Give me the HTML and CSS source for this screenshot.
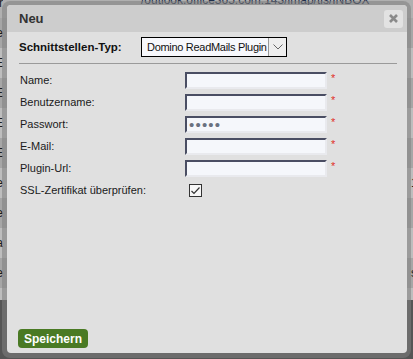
FILE: index.html
```html
<!DOCTYPE html>
<html lang="de">
<head>
    <meta charset="UTF-8">
    <title>Neu</title>
    <link rel="stylesheet" href="styles.css">
</head>
<body>
    <!-- page behind the dialog -->
    <div class="page">
        <div class="bg-row bg-top"><span class="bg-left">Server</span><span class="bg-mid">/outlook.office365.com:143/imap/tls/INBOX</span></div>
        <div class="bg-row dark"><span class="bg-left">ve</span></div>
        <div class="bg-row"><span class="bg-left">E</span></div>
        <div class="bg-row dark"><span class="bg-left">E</span></div>
        <div class="bg-row"><span class="bg-left">E</span></div>
        <div class="bg-row dark"><span class="bg-left">E</span></div>
        <div class="bg-row"><span class="bg-left">ee</span><span class="bg-right">16</span></div>
        <div class="bg-row dark"><span class="bg-left">ve</span></div>
        <div class="bg-row"><span class="bg-left">a</span></div>
        <div class="bg-row dark"><span class="bg-left">ee</span><span class="bg-right">s</span></div>
        <div class="bg-gap"></div>
        <div class="bg-footer"></div>
    </div>

    <div class="dialog-frame">
        <div class="dialog">
            <div class="dialog-title">
                <span>Neu</span>
                <button class="close-btn" title="Schließen">
                    <svg width="11" height="11" viewBox="0 0 11 11">
                        <path d="M2 2 L9 9 M9 2 L2 9" stroke="#8a8a8a" stroke-width="2.6"/>
                    </svg>
                </button>
            </div>

            <div class="dialog-body">
                <div class="type-row">
                    <label class="type-label">Schnittstellen-Typ:</label>
                    <div class="select-box">
                        <span class="select-text">Domino ReadMails Plugin</span>
                        <span class="select-arrow">
                            <svg width="10" height="6" viewBox="0 0 10 6">
                                <path d="M0.5 0.5 L5 5 L9.5 0.5" fill="none" stroke="#666" stroke-width="1"/>
                            </svg>
                        </span>
                    </div>
                </div>
                <hr class="separator">

                <form class="fields">
                    <label for="name">Name:</label>
                    <input type="text" id="name">
                    <span class="req">*</span>

                    <label for="user">Benutzername:</label>
                    <input type="text" id="user">
                    <span class="req">*</span>

                    <label for="pass">Passwort:</label>
                    <input type="password" id="pass" class="pass" value="12345">
                    <span class="req">*</span>

                    <label for="mail">E-Mail:</label>
                    <input type="text" id="mail">
                    <span class="req">*</span>

                    <label for="url">Plugin-Url:</label>
                    <input type="text" id="url">
                    <span class="req">*</span>

                    <label for="ssl">SSL-Zertifikat überprüfen:</label>
                    <span class="check-cell"><span class="checkbox"><svg width="11" height="11" viewBox="0 0 11 11"><path d="M1.5 6 L4 8.5 L9.5 2.5" fill="none" stroke="#333" stroke-width="1.2"/></svg></span></span>
                    <span></span>
                </form>
            </div>

            <div class="dialog-footer">
                <button class="save-btn">Speichern</button>
            </div>
        </div>
    </div>
</body>
</html>
```

FILE: styles.css
```css
body {
    margin: 0;
    font-family: "Liberation Sans", Arial, sans-serif;
    font-size: 11px;
    color: #222;
    background: #b5b5b5;
    overflow: hidden;
}

/* background page */
.page {
    width: 413px;
    height: 359px;
    overflow: hidden;
}
.bg-row {
    height: 30px;
    line-height: 30px;
    display: flex;
    justify-content: space-between;
    background: #bdbdbd;
    white-space: nowrap;
    overflow: hidden;
    color: #1c1c1c;
    font-size: 12px;
}
.bg-row.dark {
    background: #a6a6a6;
}
.bg-top {
    height: 18px;
    line-height: 6px;
    background: #b0b0b0;
    position: relative;
}
.bg-left {
    margin-left: -1px;
    direction: rtl;
    width: 4px;
    overflow: hidden;
}
.bg-right {
    margin-right: -6px;
    width: 8px;
    overflow: hidden;
}
.bg-mid {
    position: absolute;
    left: 141px;
    top: -6px;
    line-height: 12px;
    color: #1f2e4a;
}
.bg-gap {
    height: 12px;
    background: #bdbdbd;
}
.bg-footer {
    height: 59px;
    background: #555;
}

/* dialog */
.dialog-frame {
    position: absolute;
    left: 2px;
    top: 1px;
    padding: 4px 4px 5px 5px;
    background: rgba(128, 128, 128, 0.55);
    border-radius: 8px;
}
.dialog {
    width: 400px;
    height: 348px;
    background: #e0e0e0;
    border-radius: 4px;
    display: flex;
    flex-direction: column;
}
.dialog-title {
    height: 27px;
    background: #cdcdcd;
    border-radius: 4px 4px 0 0;
    display: flex;
    align-items: center;
    justify-content: space-between;
    padding: 0 4px 0 12px;
    font-size: 13px;
    font-weight: bold;
    color: #333;
}
.close-btn {
    width: 19px;
    height: 18px;
    padding: 0;
    border: none;
    border-radius: 3px;
    background: #e2e2e2;
    display: flex;
    align-items: center;
    justify-content: center;
}

.dialog-body {
    flex: 1;
    padding: 5px 10px 0 12px;
}
.type-row {
    display: flex;
    align-items: center;
    height: 20px;
}
.type-label {
    font-weight: bold;
    font-size: 11.5px;
    color: #111;
    width: 122px;
}
.select-box {
    width: 144px;
    height: 18px;
    border: 1px solid #000;
    background: #f7f8fc;
    display: flex;
    align-items: center;
}
.select-text {
    flex: 1;
    padding-left: 5px;
    color: #111;
    white-space: nowrap;
    overflow: hidden;
    font-size: 11px;
    letter-spacing: -0.3px;
}
.select-arrow {
    width: 17px;
    height: 18px;
    border-left: 1px solid #999;
    background: #eeeeee;
    display: flex;
    align-items: center;
    justify-content: center;
}
.separator {
    border: none;
    border-top: 1px solid #9a9a9a;
    margin: 6px 0 0 0;
    width: 378px;
}

.fields {
    display: grid;
    grid-template-columns: 166px 142px 14px;
    grid-auto-rows: 17px;
    row-gap: 5px;
    margin-top: 8px;
    align-items: center;
}
.fields label {
    color: #1a1a1a;
    line-height: 17px;
    padding-left: 1px;
}
.fields input {
    box-sizing: border-box;
    width: 142px;
    height: 17px;
    margin: 0;
    padding: 0 2px;
    border: 2px solid #e9eaee;
    border-top: 2px solid #4a4e63;
    border-left: 2px solid #4a4e63;
    background: #f5f7fb;
    font-family: "Liberation Sans", Arial, sans-serif;
    font-size: 12px;
    color: #6a7180;
    outline: none;
}
.fields input.pass {
    font-size: 15px;
    letter-spacing: 1.2px;
}
.req {
    color: #e0302a;
    font-size: 11px;
    padding-left: 4px;
    align-self: start;
    line-height: 12px;
}
.check-cell {
    display: flex;
    align-items: center;
    padding-left: 4px;
}
.checkbox {
    width: 11px;
    height: 11px;
    border: 1px solid #333;
    background: #f7f7f7;
    display: flex;
}

.dialog-footer {
    padding: 0 0 5px 11px;
}
.save-btn {
    height: 19px;
    padding: 0 6px;
    background: #4a7a24;
    color: #fff;
    font-family: "Liberation Sans", Arial, sans-serif;
    font-size: 12px;
    font-weight: bold;
    border: none;
    border-radius: 4px;
}
```
